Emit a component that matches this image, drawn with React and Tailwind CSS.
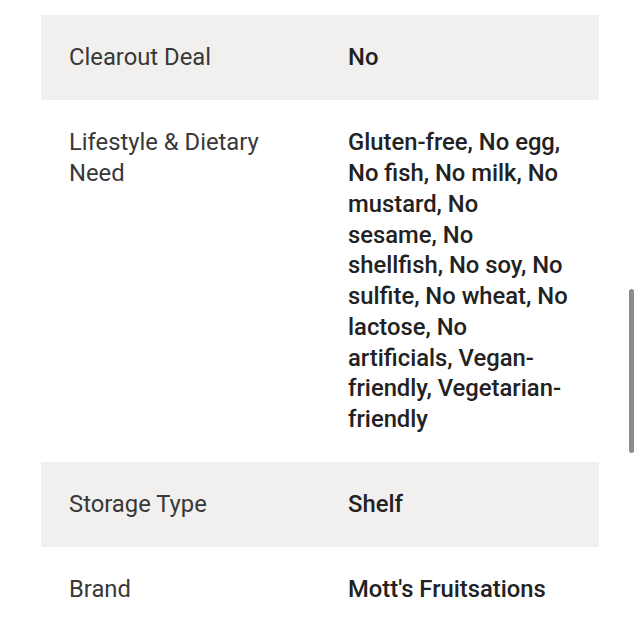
import React from 'react';

const rows = [
  { label: 'Clearout Deal', value: 'No', shaded: true },
  {
    label: 'Lifestyle & Dietary Need',
    value:
      'Gluten-free, No egg, No fish, No milk, No mustard, No sesame, No shellfish, No soy, No sulfite, No wheat, No lactose, No artificials, Vegan-friendly, Vegetarian-friendly',
    shaded: false,
  },
  { label: 'Storage Type', value: 'Shelf', shaded: true },
  { label: 'Brand', value: "Mott's Fruitsations", shaded: false },
];

const App = () => {
  return (
    <div className="relative w-[640px] h-[640px] overflow-hidden bg-white font-['Roboto',sans-serif]">
      <div className="pt-[15px] pl-[41px] w-[599px]">
        {rows.map((row) => (
          <div
            key={row.label}
            className={`grid grid-cols-2 py-[27.2px] text-[23.8px] leading-[30.75px] ${row.shaded ? 'bg-[#f1f0ef]' : 'bg-white'}`}
          >
            <div className="px-[28px] text-[#383838]">{row.label}</div>
            <div className="px-[28px] font-medium text-[#222222]">{row.value}</div>
          </div>
        ))}
      </div>

      {/* scrollbar thumb */}
      <div className="absolute left-[629px] top-[289px] w-[5px] h-[164px] rounded-full bg-[#8c8c8c]" />
    </div>
  );
};

export default App;
